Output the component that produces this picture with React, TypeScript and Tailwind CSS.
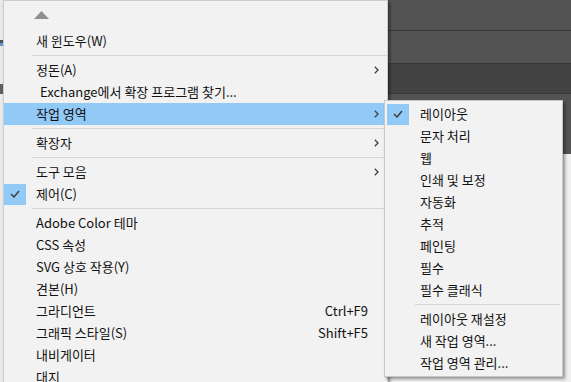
import React from 'react';

type Row =
  | { sep: true }
  | {
      sep?: false;
      label: string;
      check?: boolean;
      arrow?: boolean;
      shortcut?: string;
      indent?: boolean;
      active?: boolean;
    };

const mainItems: Row[] = [
  { label: '새 윈도우(W)' },
  { sep: true },
  { label: '정돈(A)', arrow: true },
  { label: 'Exchange에서 확장 프로그램 찾기...', indent: true },
  { label: '작업 영역', arrow: true, active: true },
  { sep: true },
  { label: '확장자', arrow: true },
  { sep: true },
  { label: '도구 모음', arrow: true },
  { label: '제어(C)', check: true },
  { sep: true },
  { label: 'Adobe Color 테마' },
  { label: 'CSS 속성' },
  { label: 'SVG 상호 작용(Y)' },
  { label: '견본(H)' },
  { label: '그라디언트', shortcut: 'Ctrl+F9' },
  { label: '그래픽 스타일(S)', shortcut: 'Shift+F5' },
  { label: '내비게이터' },
  { label: '대지' },
];

const subItems: Row[] = [
  { label: '레이아웃', check: true },
  { label: '문자 처리' },
  { label: '웹' },
  { label: '인쇄 및 보정' },
  { label: '자동화' },
  { label: '추적' },
  { label: '페인팅' },
  { label: '필수' },
  { label: '필수 클래식' },
  { sep: true },
  { label: '레이아웃 재설정' },
  { label: '새 작업 영역...' },
  { label: '작업 영역 관리...' },
];

const Check = () => (
  <div className="w-[22px] h-[21px] bg-[#91c9f7] flex items-center justify-center">
    <svg width="10" height="8" viewBox="0 0 10 8">
      <path d="M1 4 L4 7 L9 1" fill="none" stroke="#3a3a3a" strokeWidth="1.4" />
    </svg>
  </div>
);

const Chevron = () => (
  <svg width="5" height="8" viewBox="0 0 5 8">
    <path d="M0.8 0.8 L4 4 L0.8 7.2" fill="none" stroke="#404040" strokeWidth="1.3" />
  </svg>
);

const MainMenu = () => (
  <div className="absolute left-[3px] top-0 w-[385px] h-[400px] bg-[#f2f2f2] border border-[#cccccc] shadow-[2px_2px_3px_rgba(0,0,0,0.4)]">
    <div className="h-[29px] pl-[30px] pt-[10px]">
      <svg width="15" height="8" viewBox="0 0 15 8">
        <path d="M7.5 0 L15 8 L0 8 Z" fill="#8f8f8f" />
      </svg>
    </div>
    {mainItems.map((it, i) =>
      it.sep ? (
        <div key={i} className="h-[7px] flex items-center pl-[28px]">
          <div className="h-px w-full bg-[#d5d5d5]" />
        </div>
      ) : (
        <div
          key={i}
          className={`h-[22px] flex items-center ${it.active ? 'bg-[#91c9f7]' : ''}`}
        >
          <div className="w-[22px] h-[22px] flex items-center">{it.check && <Check />}</div>
          <span className={`flex-1 whitespace-nowrap ${it.indent ? 'pl-[14px]' : 'pl-[10px]'}`}>
            {it.label}
          </span>
          {it.shortcut && <span className="whitespace-nowrap">{it.shortcut}</span>}
          <div className="w-[19px] pl-[6px] flex items-center">{it.arrow && <Chevron />}</div>
        </div>
      )
    )}
  </div>
);

const SubMenu = () => (
  <div className="absolute left-[384px] top-[100px] w-[179px] h-[277px] bg-[#f2f2f2] border border-[#c8c8c8] pt-[2px] shadow-[2px_2px_3px_rgba(0,0,0,0.4)]">
    {subItems.map((it, i) =>
      it.sep ? (
        <div key={i} className="h-[7px] flex items-center pl-[30px] pr-[2px]">
          <div className="h-px w-full bg-[#d5d5d5]" />
        </div>
      ) : (
        <div key={i} className="h-[22px] flex items-center pl-[2px]">
          <div className="w-[22px] h-[22px] flex items-center">{it.check && <Check />}</div>
          <span className="pl-[11px] whitespace-nowrap">{it.label}</span>
        </div>
      )
    )}
  </div>
);

export default function App() {
  return (
    <div className="relative w-[571px] h-[382px] overflow-hidden bg-[#f0f0f0] text-[13px] leading-[22px] text-[#111] font-['Noto_Sans_CJK_KR',sans-serif]">
      {/* app behind the menu */}
      <div className="absolute inset-0 flex">
        <div className="w-[3px] flex flex-col bg-[#e9e9e9]">
          <div className="h-[40px]" />
          <div className="h-[3px] bg-[#505050]" />
          <div className="h-[3px] bg-[#5b9bd5]" />
          <div className="h-[38px]" />
          <div className="h-[10px] bg-[#606060]" />
        </div>
        <div className="flex-1" />
        <div className="w-[183px] flex flex-col">
          <div className="h-[30px] bg-[#535353]" />
          <div className="h-px bg-[#383838]" />
          <div className="h-[32px] bg-[#535353]" />
          <div className="h-px bg-[#383838]" />
          <div className="h-[29px] bg-[#434343]" />
          <div className="h-px bg-[#383838]" />
          <div className="h-[60px] bg-[#535353]" />
          <div className="flex-1 bg-[#f0f0f0]" />
        </div>
      </div>
      <MainMenu />
      <SubMenu />
    </div>
  );
}
